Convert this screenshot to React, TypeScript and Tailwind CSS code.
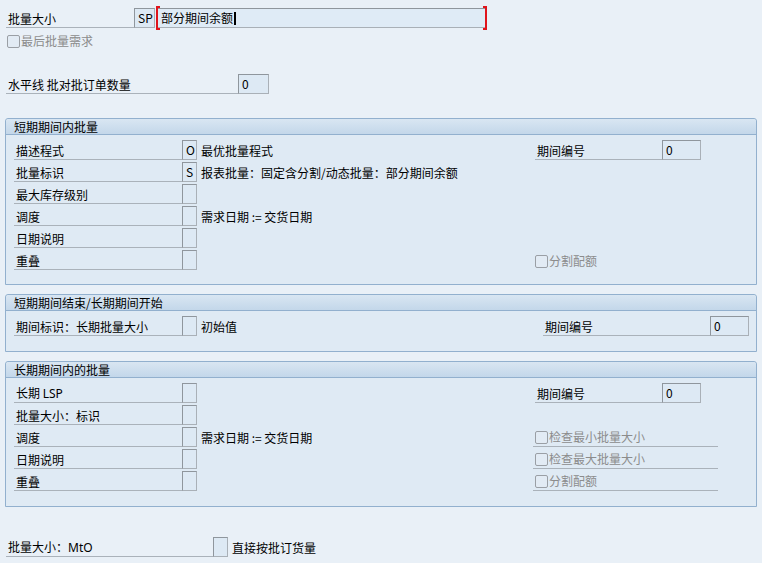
import React from "react";

function Field({ className = "", children }: { className?: string; children?: React.ReactNode }) {
  return (
    <div
      className={
        "h-[20px] shrink-0 border border-[#a9b0b7] border-t-[#8f969d] border-l-[#8f969d] bg-[#dde9f4] flex items-center pl-[3px] leading-[14px] " +
        className
      }
    >
      {children}
    </div>
  );
}

function Label({ className = "", children }: { className?: string; children?: React.ReactNode }) {
  return (
    <div className={"h-[20px] shrink-0 border-b border-[#aab2ba] flex items-end pl-[2px] pb-[1px] leading-[14px] " + className}>
      {children}
    </div>
  );
}

function Check({ label }: { label: string }) {
  return (
    <div className="flex items-center h-[16px]">
      <span className="w-[13px] h-[13px] border border-[#9a9fa5] rounded-[2px] bg-[#e2ebf4] shrink-0" />
      <span className="ml-[1px] text-[#8c8c8c] leading-[14px]">{label}</span>
    </div>
  );
}

function UCheck({ label }: { label: string }) {
  return (
    <div className="-ml-[2px] pl-[2px] w-[185px] h-[20px] border-b border-[#aab2ba] flex items-end pb-[1px]">
      <Check label={label} />
    </div>
  );
}

function Group({ title, children, pt, pb }: { title: string; children: React.ReactNode; pt: string; pb: string }) {
  return (
    <div className="mx-[5px] border border-[#92b0ce] rounded-t-[3px] bg-[#dfeaf4]">
      <div className="h-[16px] bg-linear-to-b from-[#d9e6f2] to-[#c3d7ea] border-b border-[#92b0ce] flex items-center pl-[8px] leading-[14px] rounded-t-[3px]">
        {title}
      </div>
      <div className={"pl-[8px] flex flex-col gap-[2px] " + pt + " " + pb}>{children}</div>
    </div>
  );
}

function Row({ left, right, leftW = "w-[521px]" }: { left: React.ReactNode; right?: React.ReactNode; leftW?: string }) {
  return (
    <div className="flex h-[20px]">
      <div className={"flex shrink-0 " + leftW}>{left}</div>
      <div className="flex">{right}</div>
    </div>
  );
}

function LeftCell({ label, value, desc }: { label: React.ReactNode; value?: string; desc?: string }) {
  return (
    <>
      <Label className="w-[168px]">{label}</Label>
      <Field className="w-[15px]">{value}</Field>
      {desc && <div className="ml-[4px] flex items-center leading-[14px] pt-[2px]">{desc}</div>}
    </>
  );
}

function Period({ w }: { w: string }) {
  return (
    <>
      <Label className={w}>期间编号</Label>
      <Field className="w-[39px]">0</Field>
    </>
  );
}

export default function App() {
  return (
    <div className="w-[762px] h-[563px] overflow-hidden bg-[#e9f0f7] text-[12px] text-black font-['Noto_Sans_CJK_SC','Noto_Sans',sans-serif]">
      <div className="pt-[8px] pl-[6px] flex h-[28px]">
        <Label className="w-[128px] pl-[1px]">批量大小</Label>
        <Field className="w-[21px] pl-[2px]">SP</Field>
        <div className="relative ml-[2px]">
          <Field className="w-[329px] bg-[#dfebf6]">
            部分期间余额<span className="w-[2px] h-[13px] bg-black ml-[1px]" />
          </Field>
          <span className="absolute -left-[1px] -top-[2px] -bottom-[2px] w-[4px] border-l-2 border-t-2 border-b-2 border-[#e0141c]" />
          <span className="absolute -right-[1px] -top-[2px] -bottom-[2px] w-[4px] border-r-2 border-t-2 border-b-2 border-[#e0141c]" />
        </div>
      </div>
      <div className="mt-[5px] pl-[7px]">
        <Check label="最后批量需求" />
      </div>
      <div className="mt-[25px] pl-[6px] flex">
        <Label className="w-[232px] pl-[1px]">水平线 批对批订单数量</Label>
        <Field className="w-[31px]">0</Field>
      </div>

      <div className="mt-[24px]">
        <Group title="短期期间内批量" pt="pt-[5px]" pb="pb-[14px]">
          <Row left={<LeftCell label="描述程式" value="O" desc="最优批量程式" />} right={<Period w="w-[127px]" />} />
          <Row left={<LeftCell label="批量标识" value="S" desc="报表批量：固定含分割/动态批量：部分期间余额" />} />
          <Row left={<LeftCell label="最大库存级别" />} />
          <Row left={<LeftCell label="调度" desc="需求日期 := 交货日期" />} />
          <Row left={<LeftCell label="日期说明" />} />
          <Row left={<LeftCell label="重叠" />} right={<div className="flex items-center pt-[2px]"><Check label="分割配额" /></div>} />
        </Group>
      </div>

      <div className="mt-[9px]">
        <Group title="短期期间结束/长期期间开始" pt="pt-[5px]" pb="pb-[15px]">
          <Row leftW="w-[529px]" left={<LeftCell label="期间标识：长期批量大小" desc="初始值" />} right={<Period w="w-[167px]" />} />
        </Group>
      </div>

      <div className="mt-[9px]">
        <Group title="长期期间内的批量" pt="pt-[5px]" pb="pb-[15px]">
          <Row left={<LeftCell label={<span>长期 <span className="font-['Noto_Sans',sans-serif]">LSP</span></span>} />} right={<Period w="w-[127px]" />} />
          <Row left={<LeftCell label="批量大小：标识" />} />
          <Row left={<LeftCell label="调度" desc="需求日期 := 交货日期" />} right={<UCheck label="检查最小批量大小" />} />
          <Row left={<LeftCell label="日期说明" />} right={<UCheck label="检查最大批量大小" />} />
          <Row left={<LeftCell label="重叠" />} right={<UCheck label="分割配额" />} />
        </Group>
      </div>

      <div className="mt-[30px] pl-[6px] flex">
        <Label className="w-[207px] pl-[1px]">
          <span>批量大小：<span className="font-['Noto_Sans',sans-serif]">MtO</span></span>
        </Label>
        <Field className="w-[15px]" />
        <div className="ml-[4px] flex items-center leading-[14px] pt-[2px]">直接按批订货量</div>
      </div>
    </div>
  );
}
